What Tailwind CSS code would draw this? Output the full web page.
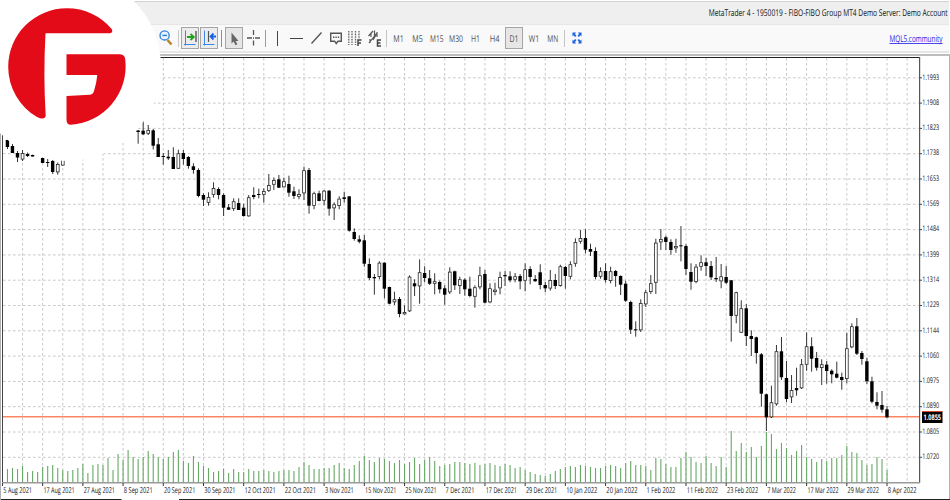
<!DOCTYPE html>
<html lang="en">
<head>
  <meta charset="UTF-8" />
  <title>MetaTrader 4</title>
  <script src="https://cdn.jsdelivr.net/npm/@tailwindcss/browser@4"></script>
</head>
<body class="bg-white w-[950px] h-[500px] overflow-hidden relative font-['Open_Sans',sans-serif] [text-rendering:geometricPrecision]">
  <div class="flex flex-col h-[500px] pt-px">
    <!-- Title bar -->
    <header class="h-[23px] shrink-0 mr-px bg-[#efefef] border-t border-[#d2d2d2] flex justify-end">
      <svg class="w-[242px] h-[22px]" fill="#111">
        <text x="1.7" y="14.3" font-size="9.4" data-width="239">MetaTrader 4 - 1950019 - FIBO-FIBO Group MT4 Demo Server: Demo Account</text>
      </svg>
    </header>

    <!-- Toolbar -->
    <nav class="h-[29px] shrink-0 mr-px bg-[#f9f9f9] border-t border-[#e6e6e6] border-b-2 border-b-[#e6e6e6] flex items-center pl-[159px] pr-[6px]">
      <svg class="w-[14px] h-[18px] shrink-0" fill="none">
        <path d="M8.5 11 12.5 15.5" stroke="#b8862b" stroke-width="2.6" />
        <circle cx="5.6" cy="6.4" r="4.6" fill="#eaf4ff" stroke="#2f7fdb" stroke-width="1.3" />
        <path d="M3.4 6.4h4.6" stroke="#2f7fdb" stroke-width="1.4" />
      </svg>
      <i class="ml-[5px] w-px h-[17px] bg-[#c9c9c9]"></i>
      <span class="ml-[2px] w-[18px] h-[22px] bg-[#ececec] border border-[#a5a5a5] flex">
        <svg class="w-[16px] h-[20px]" fill="none">
          <path d="M3.5 2.5v15M2 16.5h11.5" stroke="#3b86e8" />
          <path d="M14 3v11" stroke="#555" stroke-width="1.4" />
          <path d="M5 9h6M8.5 6l3.3 3-3.3 3" stroke="#22a31a" stroke-width="1.8" />
        </svg>
      </span>
      <span class="ml-px w-[18px] h-[22px] bg-[#ececec] border border-[#a5a5a5] flex">
        <svg class="w-[16px] h-[20px]" fill="none">
          <path d="M3.5 2.5v15M2 16.5h11.5" stroke="#3b86e8" />
          <path d="M7.5 3v11" stroke="#555" stroke-width="1.2" />
          <path d="M9.5 8.5H15M12.5 5.5l-3 3 3 3" stroke="#1a63e6" stroke-width="1.8" />
        </svg>
      </span>
      <i class="ml-[3px] w-px h-[17px] bg-[#8f8f8f]"></i>
      <span class="ml-[3px] w-[18px] h-[22px] bg-[#e6e6e6] border border-[#a5a5a5] flex">
        <svg class="w-[16px] h-[20px]"><path d="M5.5 4.5v11l2.2-2 1.8 3.8 1.9-1-1.8-3.4h2.9z" fill="#666" /></svg>
      </span>
      <svg class="ml-[4px] w-[13px] h-[16px]" stroke="#555" stroke-width="1.3"><path d="M6.5 0v5M6.5 10.5v5M0 8h5M8 8h5M6 8h1" /></svg>
      <i class="ml-[5px] w-px h-[17px] bg-[#9d9d9d]"></i>
      <i class="ml-[11px] w-px h-[15px] bg-[#444]"></i>
      <i class="ml-[12px] w-[13px] h-px bg-[#444]"></i>
      <svg class="ml-[8px] w-[11px] h-[12px]" stroke="#555" stroke-width="1.4"><path d="M.5 11.5 10.5.5" /></svg>
      <svg class="ml-[8px] w-[12px] h-[13px]" fill="none" stroke="#555" stroke-width="1.4">
        <path d="M.7 1.2h10.6v8H8L6.2 11.5 4.6 9.2H.7z" />
        <path d="M3 5.3h1.4M5.4 5.3h1.4M7.8 5.3h1.4" stroke-width="1.5" />
      </svg>
      <svg class="ml-[6px] w-[14px] h-[18px]" fill="none" stroke="#666">
        <path d="M.8 2v14M4 2v14M7.5 2v14M11 2v8" stroke-dasharray="1.6 1" stroke-width="1.3" />
        <path d="M10 17v-6h3.5M10 14h3" stroke="#444" stroke-width="1.5" />
      </svg>
      <svg class="ml-[6px] w-[14px] h-[18px]" fill="none" stroke="#555" stroke-width="1.2">
        <path d="M.5 7 5 2M1 14 8.5 4.5M3 4v4M6.5 1.5V7M2 10v4M5 11l3-5M9 3v5" />
        <path d="M13 11H9.5v6H13M9.5 14h3" stroke="#444" stroke-width="1.5" />
      </svg>
      <i class="ml-[4px] w-px h-[17px] bg-[#c4c4c4]"></i>
      <svg class="w-[118px] h-[22px]" fill="#555" font-size="9.3">
        <text x="6.3" y="14.5" data-width="10.5">M1</text>
        <text x="25.3" y="14.5" data-width="10.5">M5</text>
        <text x="43" y="14.5" data-width="13.5">M15</text>
        <text x="62" y="14.5" data-width="14">M30</text>
        <text x="84" y="14.5" data-width="9">H1</text>
        <text x="102.7" y="14.5" data-width="9.8">H4</text>
      </svg>
      <span class="w-[18px] h-[22px] bg-[#e6e6e6] border border-[#a5a5a5]">
        <svg class="w-[16px] h-[20px]" fill="#555" font-size="9.3"><text x="3.5" y="13.5" data-width="9">D1</text></svg>
      </span>
      <svg class="w-[41px] h-[22px]" fill="#555" font-size="9.3">
        <text x="5.7" y="14.5" data-width="10.5">W1</text>
        <text x="24.3" y="14.5" data-width="11">MN</text>
      </svg>
      <i class="w-px h-[17px] bg-[#c4c4c4]"></i>
      <svg class="ml-[7px] w-[10px] h-[12px]" fill="#1a63e6">
        <path d="M.5.5h3.5L3 2l1.5 2L3 5 1.7 3.2.5 4.5zM9.5.5H6L7 2 5.5 4 7 5l1.3-1.8L9.5 4.5zM.5 11.5h3.5L3 10l1.5-2L3 7 1.7 8.8.5 7.5zM9.5 11.5H6L7 10 5.5 8 7 7l1.3 1.8L9.5 7.5z" />
      </svg>
      <svg class="ml-auto w-[54px] h-[22px]" fill="#1a1ae6" font-size="9.4">
        <text x=".5" y="15" data-width="53">MQL5.community</text>
        <path d="M.5 16.5h53" stroke="#1a1ae6" stroke-width=".8" />
      </svg>
    </nav>

    <!-- Chart -->
    <main class="mt-px h-[446px] shrink-0 border-t-2 border-[#bdbdbd]">
      <svg id="chart" class="block w-[950px] h-[444px]" viewBox="0 56 950 444"></svg>
    </main>
  </div>

  <!-- Logo -->
  <svg class="absolute left-0 top-0 w-[170px] h-[170px]">
    <circle cx="67" cy="67" r="94" fill="#fff" />
    <g fill="#e30b17">
      <path d="M45.5 33.3H110Q113.2 32.5 111.9 29.2A58.6 58.6 0 0 0 67 8.3A58.6 58.6 0 0 0 8.2 66.7A58.6 58.6 0 0 0 37 117Q44.5 120.5 45.7 116 43.2 75 45.5 33.3Z" />
      <path d="M66.5 54.3H120Q125 54.5 125.3 60A58.7 58.7 0 0 1 71 124.8Q66.5 124.5 66.5 120V96L90 94.7Q93.3 94.5 94.3 90 96.5 83 97.3 75H66.5Z" />
    </g>
  </svg>

  <script>
    // bar index, high, low, body top, body bottom, 1 = rising (hollow)
    const candles = [
      [1,139.5,149,140,147,0],[2,144,153,146,153,0],[3,151,162,153,157.5,0],[4,150,161,153,159.5,1],
      [5,152.5,157,154,156,0],[6,154.5,156.5,155,156.5,0],[8,157,163,158,163,0],[9,159,167,162,163,0],
      [10,160,174,161,172,0],[11,162.5,174.7,164,172.3,1],[12,158,165.7,158,165.5,1],
      [27,130,143.7,130.5,132,0],[28,121,135,130.7,134.3,0],[29,125,135,130,133.7,1],[30,129,149.5,130.3,145.7,0],
      [31,138,157,144.3,157,0],[32,153,164.7,156,157,0],[33,150,160,156.7,158.3,0],[34,147.3,169,157,169,0],
      [35,149.7,169,153.3,168.7,1],[36,150,164.7,153,159,0],[37,156,168.7,157,166,0],[38,163.3,173.7,166.3,170,0],
      [39,168.3,197.3,170,196,0],[40,193.3,206,195,199.7,0],[41,192.3,205.7,197,202.7,1],[42,182.3,197.7,188,195,1],
      [43,187.3,199.3,189,195,0],[44,193.3,216,195,207.7,0],[45,204,210,207.3,209.7,0],[46,198.3,211,201.3,209,1],
      [47,198.3,210,203,210,0],[48,203.7,216.7,207.7,216,0],[49,195,216.7,197.3,216.3,1],[50,187.3,199.3,195,197,0],
      [51,188.7,198.3,194,195,0],[52,188.3,202.7,191,194.7,1],[53,174,192,185,191,1],[54,177.5,190,180,184.7,1],
      [55,175,188,179.3,187.7,0],[56,177.7,187.3,181.3,187.3,1],[57,175.7,196.7,184,192.7,0],[58,186.7,199,191.3,196,0],
      [59,189.3,199.3,194,196.7,1],[60,166.7,200,170.3,193.3,1],[61,168,213.7,170,205.7,0],[62,191.7,209.3,193.3,206,1],
      [63,190.7,201.3,193.3,201,0],[64,190,205.3,190.7,200.7,1],[65,190,215.7,190.7,208.7,0],[66,202.3,220,204.3,208.3,1],
      [67,196.3,209.3,198.7,206,1],[68,191.7,202.7,197.3,199,0],[69,196.3,231.7,196.3,230.7,0],[70,228.3,240.7,232,239,0],
      [71,235.3,243.3,239.3,241.7,0],[72,235,266.7,240.3,263.7,0],[73,258.3,280,264,278,0],[74,274,294.7,277,278.3,0],
      [75,261.3,279.3,262.7,277,1],[76,262.3,298.3,262.7,288.7,0],[77,286.7,304.3,287,303.7,0],[78,291.7,305,299.3,302.3,1],
      [79,297,317.3,299,314,0],[80,305.3,314.7,312,314.3,1],[81,275.3,312,276.7,311.3,1],[82,279.3,296,283.3,286.3,0],
      [83,259.3,303.7,272.3,286.3,1],[84,266.3,282.3,273,278,0],[85,270,285,278.3,283.7,0],[86,273.3,294.3,281.3,283.7,1],
      [87,280.7,293.3,282,289.3,0],[88,285.3,304.7,288.3,294.7,0],[89,267.3,294,271.7,292.3,1],[90,270.7,290,271.3,285.3,0],
      [91,276.7,294,279.3,286,1],[92,278.3,295.7,279.7,289.3,0],[93,276.7,297.3,288.7,296,0],[94,285.3,307.7,287.3,296.7,1],
      [95,266.7,289.3,275.3,287.3,1],[96,270,303.3,274,302.7,0],[97,283.3,303.3,288.3,302.3,1],[98,282.7,295.3,289.7,291.7,1],
      [99,271.7,294.3,277,288.3,1],[100,271,286,275,276.3,0],[101,271.3,282.3,276.3,280.3,0],[102,273,282.3,276.3,279.7,1],
      [103,274,289.3,276,281.3,0],[104,263.3,291.3,269.3,280.7,1],[105,266.3,284.3,269,277,0],[106,275,281.7,279,281.3,0],
      [107,264.3,289.3,272.3,285,0],[108,281.7,292.3,285,288.3,0],[109,270,290.7,280,288.5,1],[110,274,289,280,286,0],
      [111,264.7,286.7,266.3,286,1],[112,266,288.7,267,276,0],[113,261.3,279.3,264.3,276.7,1],[114,238.3,266.7,242,263.7,1],
      [115,230,243.7,238,241.7,1],[116,229.3,253.3,238,249.7,0],[117,243.7,256,249,251.7,0],[118,247.3,279.3,251,277,0],
      [119,267.3,278.7,271.3,276.7,1],[120,263.3,282.7,271,280,0],[121,266.7,283.3,271.3,281,1],[122,270,286.7,271,276,0],
      [123,275.3,295,276,284.7,0],[124,280.7,302,283.7,300.7,0],[125,300.7,334,302,329.7,0],[126,321.3,336.7,329.3,330.3,0],
      [127,299.3,332,303,330.3,1],[128,290,307,292.3,304.3,1],[129,275,294,283.3,292,1],[130,238.7,294,242.7,282.7,1],
      [131,229,250,239,242.3,1],[132,235.7,250,237.3,242,0],[133,239.3,254.7,242,250,0],[134,238.7,252.7,246,248.3,1],
      [135,226,261.3,245.3,246.3,0],[136,244.3,275,246,269,0],[137,263.3,289.7,272,281.7,0],[138,264,283.3,266.7,282,1],
      [139,255.3,270.7,262.3,266.7,1],[140,257.7,276,262.3,266,0],[141,261,280,266,277.3,0],[142,257,282,278,279.3,0],
      [143,264,288.3,276.3,281.3,1],[144,266,284,277,282.7,0],[145,280,341.7,280.3,316,0],[146,291.7,323.3,292.3,315.7,1],
      [147,300.3,332.7,308.3,332.7,1],[148,304,346,308.3,336,0],[149,330.3,356,336,339,0],[150,336.7,363.7,337.3,353,0],
      [151,353,406.7,354.3,393.7,0],[152,393.7,431,394.3,417.3,0],[153,385.7,418,402.3,417.3,1],[154,345,405.7,351.3,404.3,1],
      [155,337,380,351.3,377.3,0],[156,361,402.3,378,399,0],[157,375,403,390,397.3,1],[158,367.7,395.7,388,390.3,0],
      [159,359,389,364.3,388.3,1],[160,332.3,370.7,346.3,364.7,1],[161,337.3,371.7,346.3,358.7,0],[162,352,370.7,358,367.7,0],
      [163,359.3,385,364.3,368,1],[164,361,383.7,364.7,371,0],[165,369.3,383.3,370.7,374.3,0],[166,361.7,378.3,373.7,377.7,0],
      [167,372.7,389.7,377,380,0],[168,332.7,383.3,348.3,379,1],[169,323.3,348.3,326.3,347.3,1],[170,318,355,326.3,353.7,0],
      [171,351,364.7,353,359,0],[172,357.7,384,361.3,381.3,0],[173,376.7,403.3,381.3,401.7,0],[174,392.3,409.3,402,405.7,0],
      [175,391,412.7,405,409.7,0],[176,406,418,409.3,417.3,0],
    ];

    // volume bar heights, first entry is bar 1
    const volumes = [
      13,14,13,16,10,11,10,15,16,17,14,12,11,12,14,18,9,17,18,17,24,12,28,22,32,25,23,25,31,28,25,23,
      25,30,32,21,19,26,20,16,14,10,11,13,9,13,10,10,13,11,11,12,11,10,11,12,12,11,15,20,17,13,13,14,
      14,17,19,14,13,17,21,26,22,20,24,23,21,19,22,18,20,24,18,22,25,21,16,17,18,20,20,19,18,19,17,18,
      19,17,16,18,17,14,15,12,10,8,7,6,8,11,13,15,16,15,17,16,15,14,14,16,17,16,14,19,21,17,17,16,
      12,24,23,18,15,15,24,30,25,20,19,26,19,16,25,15,51,31,39,30,35,25,36,50,48,33,39,34,27,31,37,25,
      23,20,23,21,24,24,27,36,30,29,22,17,18,25,23,12,
    ];

    const dates = ["5 Aug 2021","17 Aug 2021","27 Aug 2021","8 Sep 2021","20 Sep 2021","30 Sep 2021","12 Oct 2021","22 Oct 2021","3 Nov 2021","15 Nov 2021","25 Nov 2021","7 Dec 2021","17 Dec 2021","29 Dec 2021","10 Jan 2022","20 Jan 2022","1 Feb 2022","11 Feb 2022","23 Feb 2022","7 Mar 2022","17 Mar 2022","29 Mar 2022","8 Apr 2022"];
    const prices = ["1.1993","1.1908","1.1823","1.1738","1.1653","1.1569","1.1484","1.1399","1.1314","1.1229","1.1144","1.1060","1.0975","1.0890","1.0805","1.0720"];

    const barX = i => 2.45 + i * 5.026;
    const line = (x1, y1, x2, y2, color, extra = "") => `<path d="M${x1} ${y1}L${x2} ${y2}" stroke="${color}" ${extra}/>`;
    const label = (x, y, width, text, extra = "") => `<text x="${x}" y="${y}" data-width="${width}" ${extra}>${text}</text>`;
    let out = "";

    // grid
    for (let i = 4; i <= 180; i += 4) out += line(barX(i), 58, barX(i), 482, "#c8c8c8", 'stroke-dasharray="2.6 2.4"');
    prices.forEach((p, k) => {
      const y = 77.8 + k * 25.3;
      out += line(3, y, 919, y, "#c8c8c8", 'stroke-dasharray="2.6 2.4"');
      out += line(920, y, 922, y, "#444");
      out += label(922.3, y + 1.7, 16.8, p, 'font-size="7.8" fill="#111"');
    });

    volumes.forEach((h, n) => { out += line(barX(n + 1), 482 - h, barX(n + 1), 482, "#66a866", 'stroke-width="1.1"'); });

    out += line(3, 416.7, 920, 416.7, "#fb8560", 'stroke-width="1.6"');

    candles.forEach(([i, high, low, top, bottom, up]) => {
      const x = barX(i);
      out += line(x, high, x, low, "#2a2a2a", 'stroke-width=".95"');
      out += up
        ? `<rect x="${x - 1.4}" y="${top + .4}" width="2.8" height="${Math.max(1.5, bottom - top - .8)}" fill="#fff" stroke="#2a2a2a" stroke-width=".8"/>`
        : `<rect x="${x - 1.75}" y="${top}" width="3.4" height="${bottom - top}" fill="#000"/>`;
    });

    // frame and axes
    out += line(.5, 56, .5, 500, "#b0b0b0");
    out += line(2.5, 57, 2.5, 483, "#444");
    out += line(2, 57.5, 920, 57.5, "#222");
    out += line(919.6, 57, 919.6, 483, "#555", 'stroke-width="1.2"');
    out += line(2, 482.7, 920, 482.7, "#9a9a9a", 'stroke-width="1.6"');
    out += line(949.5, 56, 949.5, 500, "#b0b0b0");
    out += line(1, 499.5, 121.5, 499.5, "#222") + line(179, 499.5, 950, 499.5, "#222");

    dates.forEach((d, k) => {
      const x = barX(k * 8);
      out += line(x, 483, x, 486, "#333");
      out += label(x + .8, 493.2, d.length > 10 ? 31.2 : 28.8, d, 'font-size="8.2" fill="#111"');
    });

    out += '<rect x="922" y="411.5" width="20.5" height="11.5" fill="#000"/>' + line(922, 411.5, 942.5, 411.5, "#d04a2a");
    out += label(923.5, 420.2, 17.5, "1.0855", 'font-size="7.8" font-weight="700" fill="#fff"');

    document.getElementById("chart").innerHTML = out;

    // condense every label to its column width
    document.querySelectorAll("text[data-width]").forEach(t => {
      const x = t.getAttribute("x"), y = t.getAttribute("y");
      t.setAttribute("font-family", "Open Sans, sans-serif");
      t.setAttribute("text-rendering", "geometricPrecision");
      const scale = t.dataset.width / t.getComputedTextLength();
      t.setAttribute("x", 0);
      t.setAttribute("y", 0);
      t.setAttribute("transform", `translate(${x} ${y}) scale(${scale} 1)`);
    });
  </script>
</body>
</html>
